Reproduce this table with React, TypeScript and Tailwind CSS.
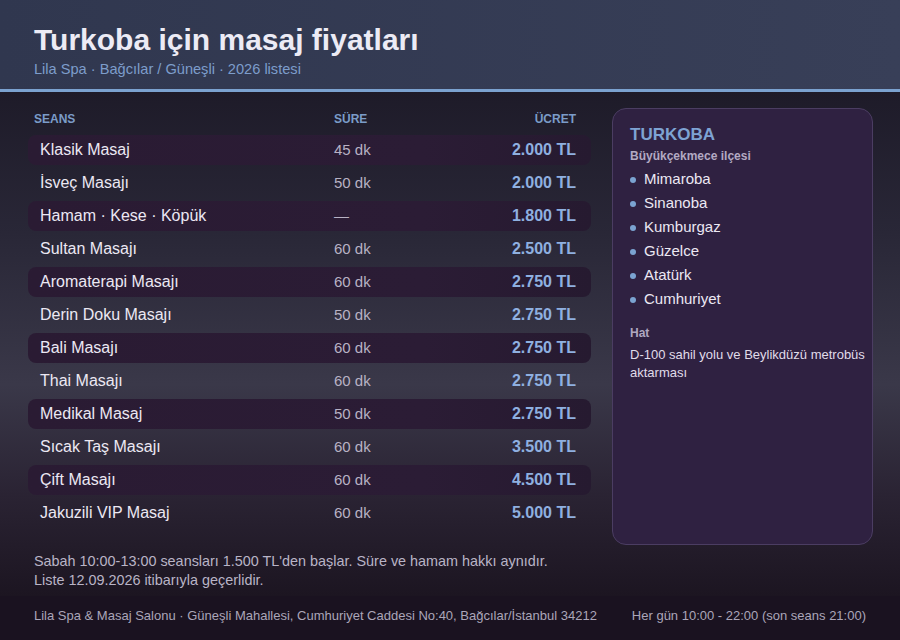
import React from 'react';

// Price list rows
const seanslar = [
  { name: 'Klasik Masaj', sure: '45 dk', ucret: '2.000 TL' },
  { name: 'İsveç Masajı', sure: '50 dk', ucret: '2.000 TL' },
  { name: 'Hamam · Kese · Köpük', sure: '—', ucret: '1.800 TL' },
  { name: 'Sultan Masajı', sure: '60 dk', ucret: '2.500 TL' },
  { name: 'Aromaterapi Masajı', sure: '60 dk', ucret: '2.750 TL' },
  { name: 'Derin Doku Masajı', sure: '50 dk', ucret: '2.750 TL' },
  { name: 'Bali Masajı', sure: '60 dk', ucret: '2.750 TL' },
  { name: 'Thai Masajı', sure: '60 dk', ucret: '2.750 TL' },
  { name: 'Medikal Masaj', sure: '50 dk', ucret: '2.750 TL' },
  { name: 'Sıcak Taş Masajı', sure: '60 dk', ucret: '3.500 TL' },
  { name: 'Çift Masajı', sure: '60 dk', ucret: '4.500 TL' },
  { name: 'Jakuzili VIP Masaj', sure: '60 dk', ucret: '5.000 TL' },
];

const mahalleler = ['Mimaroba', 'Sinanoba', 'Kumburgaz', 'Güzelce', 'Atatürk', 'Cumhuriyet'];

const App: React.FC = () => {
  return (
    <div className="w-[900px] h-[640px] flex flex-col overflow-hidden font-['Liberation_Sans',Arial,sans-serif] bg-[#1b1420]">
      <header className="h-[92px] shrink-0 px-[34px] pt-[23px] border-b-[3px] border-[#7ba2d0] bg-[linear-gradient(90deg,#30374f,#383f58)]">
        <h1 className="text-[30px] leading-[34px] font-bold text-[#ecebf5]">Turkoba için masaj fiyatları</h1>
        <p className="mt-[3px] text-[14.6px] leading-[18px] text-[#7d9dcb]">Lila Spa · Bağcılar / Güneşli · 2026 listesi</p>
      </header>

      <main className="flex-1 flex pl-[28px] pr-[27px] bg-[linear-gradient(180deg,#1e1b29_0%,#292737_28%,#3a3849_58%,#2a2333_80%,#1c1521_100%)]">
        <div className="w-[563px] flex flex-col pt-[17px]">
          <div className="flex items-center h-[20px] mb-[6px] pl-[6px] pr-[15px] text-[12px] font-bold text-[#7b9cc8]">
            <span className="w-[300px]">SEANS</span>
            <span className="flex-1">SÜRE</span>
            <span>ÜCRET</span>
          </div>
          <div className="flex flex-col gap-[3px]">
            {seanslar.map((s, i) => (
              <div
                key={s.name}
                className={
                  'flex items-center h-[30px] pl-[12px] pr-[15px] rounded-[8px] ' +
                  (i % 2 === 0 ? 'bg-[linear-gradient(90deg,#2a1b33,#2b1c35_70%,#261a30)]' : '')
                }
              >
                <span className="w-[294px] text-[16px] text-[#ece8f3]">{s.name}</span>
                <span className="flex-1 text-[15px] text-[#b8b2c4]">{s.sure}</span>
                <span className="text-[16px] font-bold text-[#8fb0e0]">{s.ucret}</span>
              </div>
            ))}
          </div>
          <div className="mt-[24px] pl-[6px] text-[14.4px] leading-[19px] text-[#b9b4c6]">
            <p>Sabah 10:00-13:00 seansları 1.500 TL'den başlar. Süre ve hamam hakkı aynıdır.</p>
            <p>Liste 12.09.2026 itibarıyla geçerlidir.</p>
          </div>
        </div>

        <aside className="ml-[21px] w-[261px] h-[437px] mt-[16px] rounded-[14px] border border-[#4b3d62] bg-[#2f2141] pl-[17px] pr-[5px] pt-[15px]">
          <h2 className="text-[17px] leading-[22px] font-bold text-[#7ea3d3]">TURKOBA</h2>
          <p className="mt-[2px] text-[12px] leading-[16px] font-bold text-[#b3aac3]">Büyükçekmece ilçesi</p>
          <ul className="mt-[3px]">
            {mahalleler.map((m) => (
              <li key={m} className="flex items-center h-[24px] text-[15px] text-[#ece8f3]">
                <span className="w-[6px] h-[6px] rounded-full bg-[#7ba3d1] mr-[8px] mt-[2px]" />
                {m}
              </li>
            ))}
          </ul>
          <p className="mt-[14px] text-[12px] leading-[16px] font-bold text-[#b0a8c0]">Hat</p>
          <p className="mt-[5px] text-[13px] leading-[18px] text-[#e0dcea]">D-100 sahil yolu ve Beylikdüzü metrobüs aktarması</p>
        </aside>
      </main>

      <footer className="h-[44px] shrink-0 flex items-start justify-between pt-[10px] px-[34px] bg-[#1a1220] text-[13px] text-[#aba6b9]">
        <span>Lila Spa &amp; Masaj Salonu · Güneşli Mahallesi, Cumhuriyet Caddesi No:40, Bağcılar/İstanbul 34212</span>
        <span>Her gün 10:00 - 22:00 (son seans 21:00)</span>
      </footer>
    </div>
  );
};

export default App;
